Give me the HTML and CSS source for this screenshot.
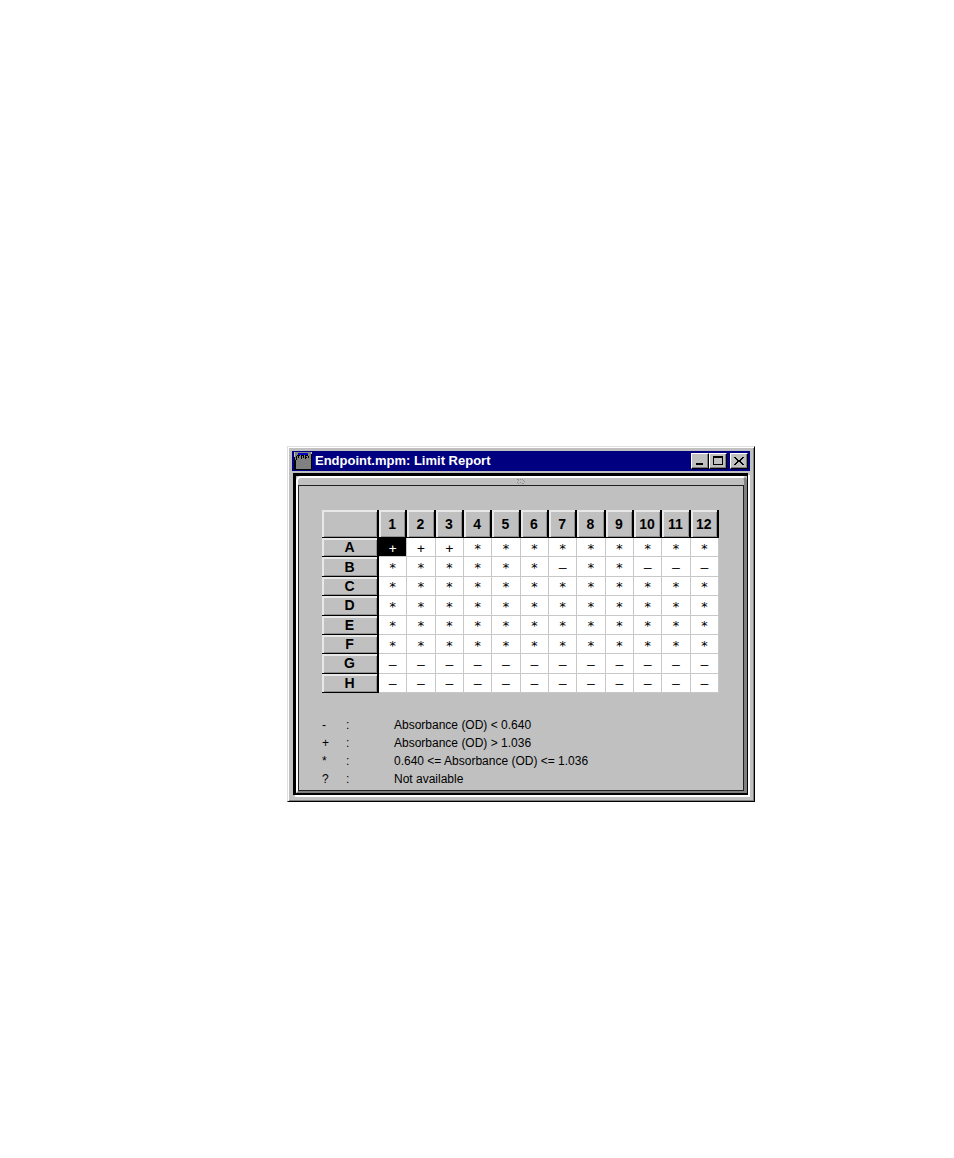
FILE: index.html
```html
<!DOCTYPE html>
<html lang="en">
<head>
    <meta charset="UTF-8">
    <meta name="viewport" content="width=device-width, initial-scale=1.0">
    <title>Endpoint.mpm: Limit Report</title>
    <link rel="stylesheet" href="styles.css">
</head>
<body>
<main class="window">
    <header class="title-bar">
        <svg class="app-icon" width="18" height="18" viewBox="0 0 18 18" shape-rendering="crispEdges" aria-hidden="true">
            <path fill="#000" d="M0 0h18v18H0z"/>
            <path fill="#808080" d="M1 0h16v17H1z"/>
            <path fill="#0000c0" d="M4 1h10v2H4z"/>
            <path fill="#000" d="M3 3h3v1H3zM7 3h3v1H7zM11 3h3v1h-3zM2 4h1v4H2zM4 4h1v2H4zM7 4h1v3H7zM9 4h1v2H9zM11 4h1v3h-1zM12 5h1v1h-1zM14 4h1v2h-1zM1 8h1v9H1z"/>
            <path fill="#c0c0c0" d="M0 0h1v5H0zM17 0h1v2h-1z"/>
        </svg>
        <h1>Endpoint.mpm: Limit Report</h1>
        <div class="controls">
            <button type="button" aria-label="Minimize">
                <svg width="14" height="12" viewBox="0 0 14 12" shape-rendering="crispEdges"><path d="M3 8h7v2H3z"/></svg>
            </button>
            <button type="button" aria-label="Maximize">
                <svg width="14" height="12" viewBox="0 0 14 12" shape-rendering="crispEdges"><path fill-rule="evenodd" d="M2 1h10v9H2zM3 3v6h8V3z"/></svg>
            </button>
            <button type="button" class="close" aria-label="Close">
                <svg width="14" height="12" viewBox="0 0 14 12" shape-rendering="crispEdges"><path d="M2 2h2v1H2zM3 3h2v1H3zM4 4h2v1H4zM5 5h4v1H5zM5 6h4v1H5zM4 7h2v1H4zM3 8h2v1H3zM2 9h2v1H2zM10 2h2v1h-2zM9 3h2v1H9zM8 4h2v1H8zM8 7h2v1H8zM9 8h2v1H9zM10 9h2v1h-2z"/></svg>
            </button>
        </div>
    </header>

    <div class="frame">
        <div class="pane">
            <div class="grip">
                <svg width="8" height="5" viewBox="0 0 8 5" shape-rendering="crispEdges" aria-hidden="true"><path fill="#909090" d="M0 0h2v1H0zM3 0h1v1H3zM5 0h1v1H5zM1 1h1v1H1zM6 1h1v1H6zM0 3h1v1H0zM7 2h1v1H7zM1 4h1v1H1zM3 3h1v1H3zM5 4h2v1H5z"/></svg>
            </div>
            <div class="report">
                <table class="plate">
                    <thead>
                    <tr><td class="corner"></td><th scope="col">1</th><th scope="col">2</th><th scope="col">3</th><th scope="col">4</th><th scope="col">5</th><th scope="col">6</th><th scope="col">7</th><th scope="col">8</th><th scope="col">9</th><th scope="col">10</th><th scope="col">11</th><th scope="col">12</th></tr>
                    </thead>
                    <tbody>
                    <tr><th scope="row">A</th><td class="selected">+</td><td>+</td><td>+</td><td>*</td><td>*</td><td>*</td><td>*</td><td>*</td><td>*</td><td>*</td><td>*</td><td>*</td></tr>
                    <tr><th scope="row">B</th><td>*</td><td>*</td><td>*</td><td>*</td><td>*</td><td>*</td><td>–</td><td>*</td><td>*</td><td>–</td><td>–</td><td>–</td></tr>
                    <tr><th scope="row">C</th><td>*</td><td>*</td><td>*</td><td>*</td><td>*</td><td>*</td><td>*</td><td>*</td><td>*</td><td>*</td><td>*</td><td>*</td></tr>
                    <tr><th scope="row">D</th><td>*</td><td>*</td><td>*</td><td>*</td><td>*</td><td>*</td><td>*</td><td>*</td><td>*</td><td>*</td><td>*</td><td>*</td></tr>
                    <tr><th scope="row">E</th><td>*</td><td>*</td><td>*</td><td>*</td><td>*</td><td>*</td><td>*</td><td>*</td><td>*</td><td>*</td><td>*</td><td>*</td></tr>
                    <tr><th scope="row">F</th><td>*</td><td>*</td><td>*</td><td>*</td><td>*</td><td>*</td><td>*</td><td>*</td><td>*</td><td>*</td><td>*</td><td>*</td></tr>
                    <tr><th scope="row">G</th><td>–</td><td>–</td><td>–</td><td>–</td><td>–</td><td>–</td><td>–</td><td>–</td><td>–</td><td>–</td><td>–</td><td>–</td></tr>
                    <tr><th scope="row">H</th><td>–</td><td>–</td><td>–</td><td>–</td><td>–</td><td>–</td><td>–</td><td>–</td><td>–</td><td>–</td><td>–</td><td>–</td></tr>
                    </tbody>
                </table>

                <ul class="legend">
                    <li><span>-</span><span>:</span><span>Absorbance (OD) &lt; 0.640</span></li>
                    <li><span>+</span><span>:</span><span>Absorbance (OD) &gt; 1.036</span></li>
                    <li><span>*</span><span>:</span><span>0.640 &lt;= Absorbance (OD) &lt;= 1.036</span></li>
                    <li><span>?</span><span>:</span><span>Not available</span></li>
                </ul>
            </div>
        </div>
    </div>
</main>
</body>
</html>
```
FILE: styles.css
```css
* {
    box-sizing: border-box;
}

body {
    margin: 0;
    padding: 446px 199px 0 287px;
    background-color: #fff;
    color: #000;
    font-family: "Liberation Sans", Arial, sans-serif;
    font-size: 12px;
}

.window {
    padding: 4px 3px;
    background-color: #c0c0c0;
    border: 1px solid #dfdfdf;
    border-right-color: #000;
    border-bottom-color: #000;
    box-shadow: inset 1px 1px #fff, inset -1px -1px #808080;
}

/* Title bar */
.title-bar {
    display: flex;
    align-items: center;
    height: 20px;
    margin: 0 1px 2px;
    padding: 0 2px;
    background-color: #000080;
    color: #fff;
}

.app-icon {
    margin-right: 3px;
}

.title-bar h1 {
    flex: 1;
    margin: 0;
    font-size: 13px;
    line-height: 16px;
}

.controls {
    display: flex;
}

.controls button {
    display: flex;
    justify-content: center;
    align-items: center;
    width: 18px;
    height: 16px;
    padding: 0;
    background-color: #c0c0c0;
    border: 1px solid #fff;
    border-right-color: #000;
    border-bottom-color: #000;
    box-shadow: inset -1px -1px #808080;
}

.controls .close {
    margin-left: 3px;
}

/* Nested borders round the report */
.frame {
    margin: 0 3px 2px 2px;
    background-color: #c0c0c0;
    border: 3px solid #000;
    border-right-width: 1px;
    border-bottom-width: 2px;
    box-shadow: 2px 2px #fff;
}

.pane {
    background-color: #c0c0c0;
    border-top: 2px solid #fff;
    border-left: 2px solid #fff;
    border-right: 3px solid #808080;
    border-bottom: 2px solid #808080;
    border-radius: 5px 5px 0 0;
}

.grip {
    display: flex;
    justify-content: center;
    align-items: center;
    height: 7px;
}

.report {
    padding: 24px 24px 2px 23px;
    border: 1px solid #202020;
}

/* Well plate */
.plate {
    width: 100%;
    height: 183px;
    border-collapse: separate;
    border-spacing: 0;
    table-layout: fixed;
    line-height: 14px;
}

.plate th,
.plate .corner {
    padding: 0;
    background-color: #c0c0c0;
    border: solid #000;
    border-width: 0 2px 1px 0;
    box-shadow: inset 2px 2px #e8e8e8, inset -1px -1px #909090;
    font-size: 14px;
    text-align: center;
}

.plate thead tr {
    height: 28px;
}

.plate thead th {
    padding-top: 1px;
}

.plate .corner {
    width: 57px;
}

.plate td {
    padding: 3px 0 0;
    background-color: #fff;
    border: solid #c8c8c8;
    border-width: 0 1px 1px 0;
    font-family: "DejaVu Sans Mono", monospace;
    font-size: 13px;
    text-align: center;
}

.plate .selected {
    background-color: #000;
    color: #fff;
}

/* Legend */
.legend {
    margin: 23px 0 0;
    padding: 0;
    list-style: none;
    line-height: 18px;
}

.legend li {
    display: grid;
    grid-template-columns: 24px 48px 1fr;
}
```
